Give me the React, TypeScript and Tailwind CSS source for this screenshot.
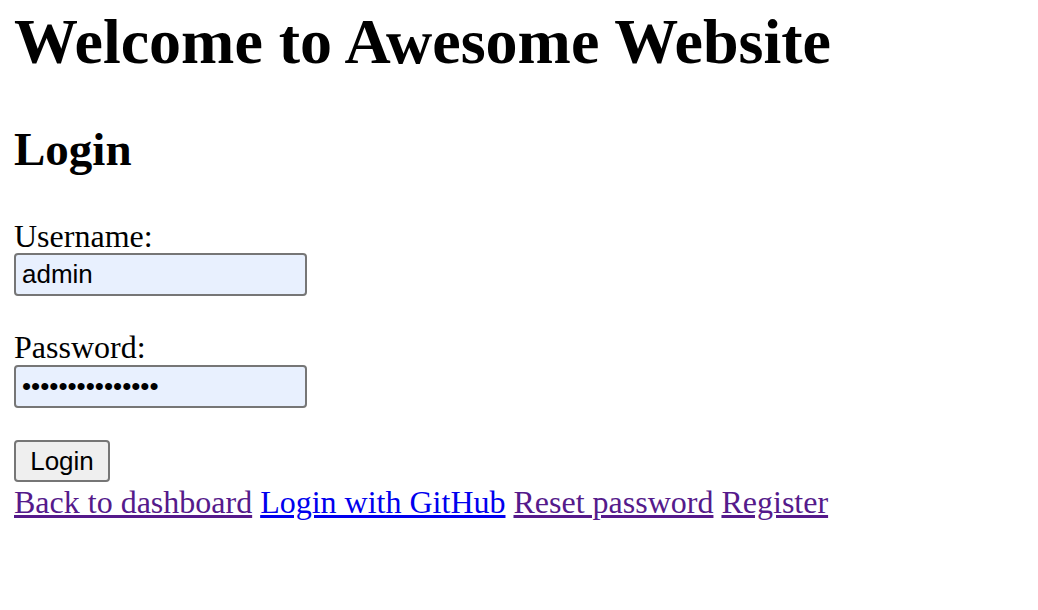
export default function App() {
  return (
    <div className="min-h-[610px] bg-white px-[14px] text-black font-['Liberation_Serif',serif]">
      <h1 className="pt-[5px] text-[64px] leading-[74px] font-bold whitespace-nowrap">
        Welcome to Awesome Website
      </h1>
      <h2 className="mt-[43px] text-[47px] leading-[54px] font-bold">Login</h2>

      <form className="mt-[40px]" onSubmit={(e) => e.preventDefault()}>
        <label className="block h-[37px] text-[32px] leading-[40px]">Username:</label>
        <input
          type="text"
          defaultValue="admin"
          className="block w-[293px] h-[43px] px-[6px] border-2 border-[#767676] rounded-[4px] bg-[#e8f0fe] text-[26px] leading-none font-['Liberation_Sans',Arial,sans-serif] text-black outline-none"
        />

        <label className="mt-[32px] block h-[37px] text-[32px] leading-[39px]">Password:</label>
        <input
          type="password"
          defaultValue="supersecret1234"
          className="block w-[293px] h-[43px] px-[6px] border-2 border-[#767676] rounded-[4px] bg-[#e8f0fe] text-[26px] leading-none font-['Liberation_Sans',Arial,sans-serif] text-black outline-none"
        />

        <button
          type="submit"
          className="mt-[32px] block w-[96px] h-[42px] border-2 border-[#767676] rounded-[4px] bg-[#efefef] text-[26px] leading-none font-['Liberation_Sans',Arial,sans-serif] text-black"
        >
          Login
        </button>
      </form>

      <div className="h-[37px] text-[32px] leading-[41px] whitespace-nowrap">
        <a href="#" className="underline text-[#551a8b]">Back to dashboard</a>{" "}
        <a href="#" className="underline text-[#0000ee]">Login with GitHub</a>{" "}
        <a href="#" className="underline text-[#551a8b]">Reset password</a>{" "}
        <a href="#" className="underline text-[#551a8b]">Register</a>
      </div>
    </div>
  );
}
